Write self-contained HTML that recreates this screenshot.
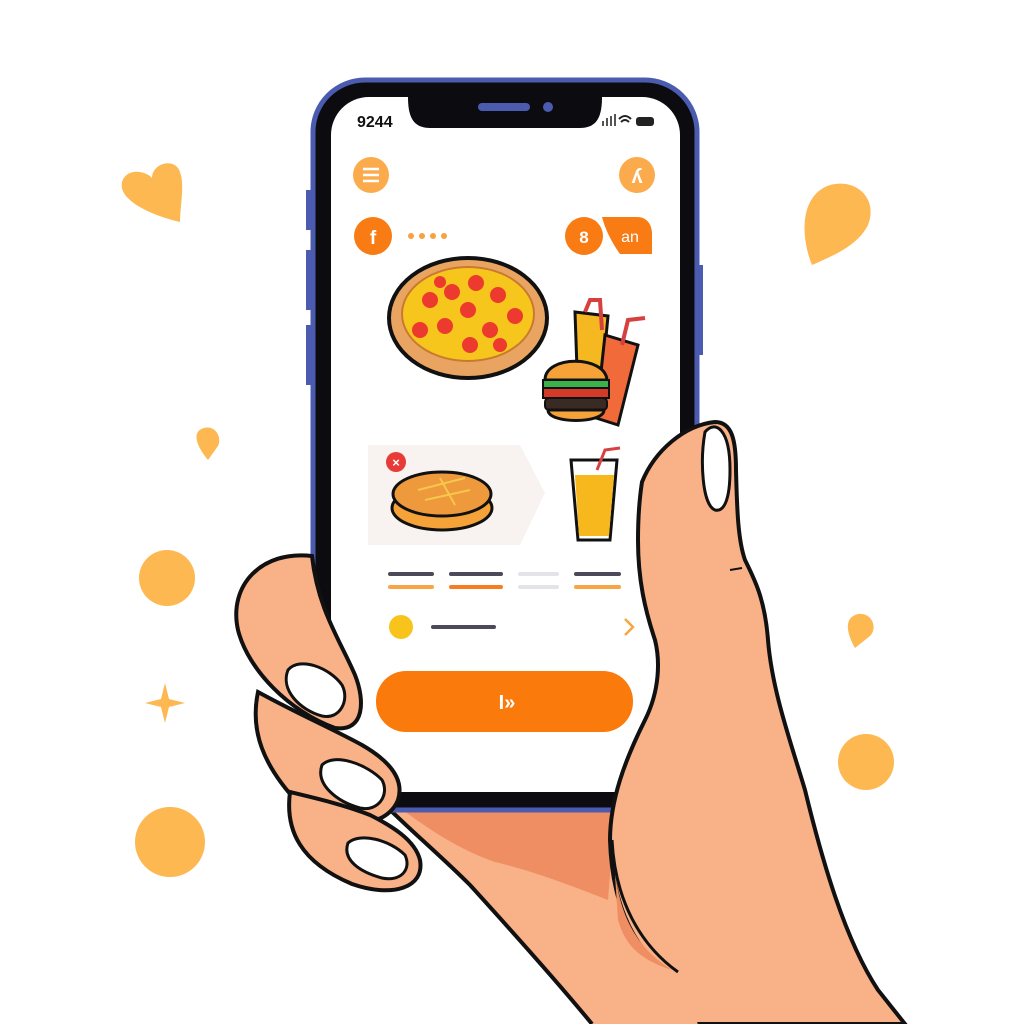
<!DOCTYPE html>
<html><head><meta charset="utf-8"><style>
html,body{margin:0;padding:0;background:#fff;width:1024px;height:1024px;overflow:hidden}
svg{display:block}
text{font-family:"Liberation Sans",sans-serif}
</style></head><body>
<svg width="1024" height="1024" viewBox="0 0 1024 1024">
<rect width="1024" height="1024" fill="#fff"/>
<g fill="#fdb852">
<path d="M180 222 C150 215 118 200 122 182 C126 168 145 170 152 178 C152 165 170 158 178 168 C186 180 180 205 180 222Z"/>
<path d="M812 265 C800 235 800 195 830 185 C858 178 878 200 868 225 C858 245 835 255 812 265Z"/>
<path d="M208 460 C198 448 190 432 204 428 C216 425 222 438 218 446 Z"/>
<path d="M855 648 C848 636 842 618 858 614 C872 612 878 628 870 636 Z"/>
<circle cx="167" cy="578" r="28"/>
<circle cx="170" cy="842" r="35"/>
<circle cx="866" cy="762" r="28"/>
<path d="M165 683 L169 699 L185 703 L169 707 L165 723 L161 707 L145 703 L161 699Z"/>
</g>
<!-- palm -->
<path d="M380 800 L640 800 L700 1024 L592 1024 C560 985 520 940 470 885 C440 855 410 830 380 800Z" fill="#f9b188"/>
<path d="M380 800 C410 830 440 855 470 885 C520 940 560 985 592 1024" fill="none" stroke="#111" stroke-width="4"/>
<path d="M400 808 L615 808 L608 900 C570 885 530 870 495 862 C460 850 430 830 400 808Z" fill="#ee8e62"/>
<!-- phone -->
<rect x="313" y="80" width="384" height="730" rx="52" fill="#0c0c10" stroke="#4b5cb0" stroke-width="5"/>
<rect x="306" y="190" width="6" height="40" fill="#4b5cb0"/>
<rect x="306" y="250" width="6" height="60" fill="#4b5cb0"/>
<rect x="306" y="325" width="6" height="60" fill="#4b5cb0"/>
<rect x="697" y="265" width="6" height="90" fill="#4b5cb0"/>
<rect x="331" y="97" width="349" height="695" rx="38" fill="#fff"/>
<path d="M408 97 L602 97 C602 115 598 128 580 128 L430 128 C412 128 408 115 408 97Z" fill="#0c0c10"/>
<rect x="478" y="103" width="52" height="8" rx="4" fill="#4b5cb0"/>
<circle cx="548" cy="107" r="5" fill="#4b5cb0"/>
<text x="357" y="127" font-size="16" font-weight="bold" fill="#111">9244</text>
<g fill="#555"><rect x="602" y="121" width="2" height="5"/><rect x="606" y="118" width="2" height="8"/><rect x="610" y="116" width="2" height="10"/><rect x="614" y="114" width="2" height="12"/></g>
<path d="M619 119 Q625 113 631 119 M621 122 Q625 118 629 122" stroke="#222" stroke-width="2" fill="none"/>
<rect x="636" y="117" width="18" height="9" rx="3" fill="#222"/>
<circle cx="371" cy="175" r="18" fill="#fbab4c"/>
<g stroke="#fff" stroke-width="2.5"><line x1="363" y1="169" x2="379" y2="169"/><line x1="363" y1="175" x2="379" y2="175"/><line x1="363" y1="181" x2="379" y2="181"/></g>
<circle cx="637" cy="175" r="18" fill="#fbab4c"/>
<text x="637" y="183" font-size="20" font-weight="bold" fill="#fff" text-anchor="middle">ʎ</text>
<circle cx="373" cy="236" r="19" fill="#f97b14"/>
<text x="373" y="244" font-size="19" font-weight="bold" fill="#fff" text-anchor="middle">f</text>
<g fill="#f9a040"><circle cx="411" cy="236" r="3"/><circle cx="422" cy="236" r="3"/><circle cx="433" cy="236" r="3"/><circle cx="444" cy="236" r="3"/></g>
<path d="M602 217 L637 217 C648 217 652 226 652 234 L652 254 L620 254 C610 240 605 228 602 217Z" fill="#f97b14"/>
<circle cx="584" cy="236" r="19" fill="#f97b14"/>
<text x="584" y="243" font-size="17" font-weight="bold" fill="#fff" text-anchor="middle">8</text>
<text x="630" y="242" font-size="16" fill="#fff" text-anchor="middle">an</text>
<ellipse cx="468" cy="318" rx="79" ry="60" fill="#e9a461" stroke="#111" stroke-width="4"/>
<ellipse cx="468" cy="314" rx="66" ry="47" fill="#f7c61c" stroke="#c97a30" stroke-width="2"/>
<g fill="#ec3a2e"><circle cx="430" cy="300" r="8"/><circle cx="452" cy="292" r="8"/><circle cx="476" cy="283" r="8"/><circle cx="498" cy="295" r="8"/><circle cx="515" cy="316" r="8"/><circle cx="468" cy="310" r="8"/><circle cx="445" cy="326" r="8"/><circle cx="490" cy="330" r="8"/><circle cx="420" cy="330" r="8"/><circle cx="470" cy="345" r="8"/><circle cx="500" cy="345" r="7"/><circle cx="440" cy="282" r="6"/></g>
<path d="M575 312 L608 316 L600 400 L578 398 Z" fill="#f5b820" stroke="#111" stroke-width="3"/>
<path d="M605 335 L638 345 L618 425 L596 418 Z" fill="#f06a3a" stroke="#111" stroke-width="3"/>
<path d="M585 312 L590 300 L600 300 L602 330 M622 345 L628 320 L645 318" stroke="#d84040" stroke-width="4" fill="none"/>
<path d="M545 380 C545 355 605 355 607 380 Z" fill="#f5a238" stroke="#111" stroke-width="3"/>
<rect x="543" y="380" width="66" height="8" fill="#3cb04a" stroke="#111" stroke-width="2"/>
<rect x="543" y="388" width="66" height="10" fill="#d43a2a" stroke="#111" stroke-width="2"/>
<rect x="545" y="398" width="62" height="12" rx="4" fill="#3a2a24" stroke="#111" stroke-width="2"/>
<path d="M548 410 L604 410 C604 424 548 424 548 410Z" fill="#f5a238" stroke="#111" stroke-width="3"/>
<path d="M368 445 L520 445 L545 493 L520 545 L368 545 Z" fill="#f8f3f0"/>
<circle cx="396" cy="462" r="10" fill="#e83a36"/>
<text x="396" y="467" font-size="13" font-weight="bold" fill="#fff" text-anchor="middle">×</text>
<ellipse cx="442" cy="508" rx="50" ry="22" fill="#f5a238" stroke="#111" stroke-width="3"/>
<ellipse cx="442" cy="494" rx="49" ry="22" fill="#ee9a3c" stroke="#111" stroke-width="3"/>
<path d="M418 490 L465 478 M425 500 L470 490 M440 478 L455 505" stroke="#f7c64c" stroke-width="2"/>
<path d="M571 460 L617 460 L610 540 L578 540 Z" fill="#fff" stroke="#111" stroke-width="3"/>
<path d="M575 475 L614 475 L609 536 L579 536 Z" fill="#f6b81c"/>
<path d="M597 470 L605 450 L620 448" stroke="#d84040" stroke-width="3" fill="none"/>
<g stroke-width="4" stroke-linecap="round">
<line x1="390" y1="574" x2="432" y2="574" stroke="#4a4a5a"/><line x1="390" y1="587" x2="432" y2="587" stroke="#f7a545"/>
<line x1="451" y1="574" x2="501" y2="574" stroke="#4a4a5a"/><line x1="451" y1="587" x2="501" y2="587" stroke="#f77e20"/>
<line x1="520" y1="574" x2="557" y2="574" stroke="#e4e4e8"/><line x1="520" y1="587" x2="557" y2="587" stroke="#e4e4e8"/>
<line x1="576" y1="574" x2="619" y2="574" stroke="#4a4a5a"/><line x1="576" y1="587" x2="619" y2="587" stroke="#f7a545"/>
<line x1="433" y1="627" x2="494" y2="627" stroke="#4a4a5a"/>
</g>
<circle cx="401" cy="627" r="12" fill="#f8c41c"/>
<path d="M625 619 L633 627 L625 635" stroke="#f7a545" stroke-width="2.5" fill="none"/>
<rect x="376" y="671" width="257" height="61" rx="30" fill="#fb7a0c"/>
<text x="507" y="709" font-size="20" font-weight="bold" fill="#fff" text-anchor="middle">I»</text>
<!-- thumb -->
<path d="M642 482 C655 450 685 425 715 422 C732 422 736 440 736 470 C737 510 738 540 745 560 C755 580 765 600 768 640 C772 690 790 740 805 790 C822 860 845 940 878 990 L905 1024 L690 1024 C680 1000 670 985 660 968 C630 940 612 900 610 840 C610 800 625 760 645 720 C660 690 660 660 655 640 C645 610 638 580 638 540 C638 515 640 495 642 482Z" fill="#f9b188" stroke="#111" stroke-width="4"/>
<path d="M650 955 L675 962 L700 1030 L640 1030 Z" fill="#f9b188"/>
<path d="M705 432 C715 420 730 428 730 470 C730 500 724 512 715 510 C702 505 700 460 705 432Z" fill="#fff" stroke="#111" stroke-width="3"/>
<path d="M614 860 C618 920 640 950 672 970 C640 960 625 945 618 920Z" fill="#ee8e62"/>
<path d="M612 840 C615 900 640 945 678 972" stroke="#111" stroke-width="3" fill="none"/>
<line x1="730" y1="570" x2="742" y2="568" stroke="#111" stroke-width="2"/>
<!-- fingers -->
<path d="M312 556 C262 550 228 585 238 630 C248 670 290 712 335 728 C365 732 365 700 355 675 C340 640 318 610 312 556Z" fill="#f9b188" stroke="#111" stroke-width="4"/>
<path d="M288 670 C300 656 330 668 342 685 C350 700 340 720 322 716 C300 710 280 690 288 670Z" fill="#fff" stroke="#111" stroke-width="3"/>
<path d="M258 692 C250 730 262 765 300 805 C330 830 385 832 398 800 C405 778 388 760 362 745 C335 730 300 715 258 692Z" fill="#f9b188" stroke="#111" stroke-width="4"/>
<path d="M322 765 C335 752 368 765 382 780 C390 795 378 812 360 808 C338 802 315 785 322 765Z" fill="#fff" stroke="#111" stroke-width="3"/>
<path d="M290 792 C285 830 300 862 352 884 C392 898 425 888 420 860 C415 840 392 826 370 815 C345 805 315 798 290 792Z" fill="#f9b188" stroke="#111" stroke-width="4"/>
<path d="M348 843 C360 832 390 840 405 855 C412 870 400 882 382 878 C360 872 342 860 348 843Z" fill="#fff" stroke="#111" stroke-width="3"/>
</svg>
</body></html>
